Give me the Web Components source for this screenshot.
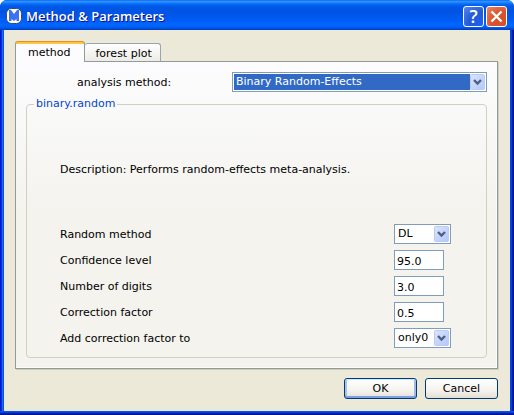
<!DOCTYPE html>
<html lang="en">
<head>
<meta charset="utf-8">
<title>Method &amp; Parameters</title>
<style>
  html { background: #fff; }
  body { margin: 0; font: 11px/14px "DejaVu Sans", sans-serif; color: #000; }
</style>
</head>
<body>
<dialog-window>
  <window-title slot="title">Method &amp; Parameters</window-title>
  <tab-pane>
    <combo-row label="analysis method:" value="Binary Random-Effects"></combo-row>
    <param-group>
      <span slot="legend">binary.random</span>
      <span slot="description">Description: Performs random-effects meta-analysis.</span>
      <param-row type="combo" value="DL">Random method</param-row>
      <param-row value="95.0">Confidence level</param-row>
      <param-row value="3.0">Number of digits</param-row>
      <param-row value="0.5">Correction factor</param-row>
      <param-row type="combo" value="only0">Add correction factor to</param-row>
    </param-group>
  </tab-pane>
  <push-button slot="actions" default>OK</push-button>
  <push-button slot="actions">Cancel</push-button>
</dialog-window>

<script>
const comboCss = `
  label { padding-top: 2px; }
  .combo { display: grid; height: 20px; box-sizing: border-box; border: 1px solid #7f9db9; background: #fff; padding: 1px; }
  .combo > * { grid-area: 1 / 1; }
  select { appearance: none; border: 0; margin: 0; padding: 0 18px 0 2px; min-width: 0; width: 100%;
    font: inherit; color: inherit; background: transparent; outline: 0; border-radius: 0; }
  .arrow { justify-self: end; pointer-events: none; display: block; }
`;
const comboMarkup = value => `
  <div class="combo">
    <select id="field"><option selected>${value}</option></select>
    <svg class="arrow" width="15" height="16" viewBox="0 0 15 16" aria-hidden="true">
      <defs><linearGradient id="g" x1="0" y1="0" x2="1" y2="1">
        <stop offset="0" stop-color="#dce6fd"/><stop offset=".5" stop-color="#c6d5fc"/><stop offset="1" stop-color="#b3c7f8"/>
      </linearGradient></defs>
      <rect x="0.5" y="0.5" width="14" height="15" rx="1" fill="url(#g)" stroke="#bccbf3"/>
      <path d="M4 6 7.5 9.5 11 6" fill="none" stroke="#4d6185" stroke-width="2.4"/>
    </svg>
  </div>`;

class ShadowBase extends HTMLElement {
  connectedCallback() {
    if (!this.shadowRoot) this.attachShadow({ mode: "open" }).innerHTML = this.markup();
  }
}

customElements.define("dialog-window", class extends ShadowBase {
  markup() { return `
    <style>
      :host { display: flex; flex-direction: column; box-sizing: border-box; min-height: 100vh;
        background: linear-gradient(90deg, #0019cf 0 1px, #0831d9 1px 2px, #166aee 2px 3px, #0855dd 3px 4px, #0046e8 4px calc(100% - 3px), #0040e0 calc(100% - 3px) calc(100% - 2px), #0020b0 calc(100% - 2px) calc(100% - 1px), #00138c calc(100% - 1px));
        border-radius: 7px 7px 0 0; overflow: hidden; }
      .body { flex: 1; display: flex; flex-direction: column; margin: 0 4px; padding: 11px 12px 12px 11px; background: #ece9d8; }
      ::slotted(tab-pane) { flex: 1; }
      .actions { display: flex; justify-content: flex-end; gap: 8px; padding-top: 9px; }
      .bottom { height: 4px; background: linear-gradient(#0855e8 0 1px, #0040d8 1px 2px, #0020b0 2px 3px, #00138c 3px); }
    </style>
    <slot name="title"></slot>
    <div class="body"><slot></slot><div class="actions"><slot name="actions"></slot></div></div>
    <div class="bottom"></div>`; }
});

customElements.define("window-title", class extends ShadowBase {
  markup() { return `
    <style>
      :host { display: flex; align-items: center; gap: 2px; height: 30px; box-sizing: border-box; padding: 2px 7px 0 6px;
        color: #fff; font: 600 13px/18px "Open Sans", sans-serif; text-shadow: 1px 1px #0f1089;
        background: linear-gradient(#0058ee 0, #3593ff 1px, #288eff 2px, #127dff 3px, #036ffc 4px, #0262ee 5px, #0057e5 7px, #0054e3 12px, #0058eb 16px, #005bf5 20px, #0066ff 24px, #0062f8 27px, #0047d0 29px, #003dc0 30px); }
      h1 { flex: 1; margin: 0; padding-left: 2px; font: inherit; }
      svg { display: block; }
      button { display: flex; align-items: center; justify-content: center; width: 21px; height: 21px; padding: 0; box-sizing: border-box;
        border: 1px solid #fff; border-radius: 3px; color: #fff; }
      .help { background: radial-gradient(circle at 90% 90%, #1a62f0, #2459d5 50%, #5b87ec 100%); font: 600 18px/18px "Open Sans", sans-serif; text-shadow: none; }
      .close { background: radial-gradient(circle at 90% 90%, #d9512c, #d9512c 50%, #ec8468 100%); }
    </style>
    <svg width="16" height="16" viewBox="0 0 16 16" aria-hidden="true">
      <rect x="0.5" y="0.5" width="15" height="15" rx="5" fill="#fff" stroke="#344b70"/>
      <path d="M3 2H5L8 6 11 2H13V13H10.500V11L8 13 5.500 11V13H3Z" fill="#3c71f2"/>
    </svg>
    <h1><slot></slot></h1>
    <button class="help" type="button" aria-label="Help">?</button>
    <button class="close" type="button" aria-label="Close">
      <svg width="13" height="13" viewBox="0 0 13 13" aria-hidden="true"><path d="M1.500 1.500 11.500 11.500M11.500 1.500 1.500 11.500" stroke="#fff" stroke-width="2.400"/></svg>
    </button>`; }
});

customElements.define("tab-pane", class extends ShadowBase {
  markup() { return `
    <style>
      :host { display: flex; flex-direction: column; }
      .tabs { display: flex; align-items: flex-end; margin-bottom: -1px; }
      button { font: inherit; color: inherit; box-sizing: border-box; margin: 0; border: 1px solid #919b9c; border-radius: 3px 3px 0 0; }
      .on { height: 21px; padding: 2px 14px 0 12px; border-bottom: 0; background: linear-gradient(#ffc73c 2px, #fcfcfe 2px); border-top-color: #e68b2c; z-index: 1; }
      .off { height: 18px; margin-bottom: 1px; padding: 2px 8px 0 10px; border-left: 0; border-bottom: 0; background: linear-gradient(#fff, #ecebe6); border-color: #91a7b4; }
      .pane { flex: 1; display: flex; flex-direction: column; gap: 5px; box-sizing: border-box; padding: 10px;
        border: 1px solid #919b9c; background: linear-gradient(#fcfcfe, #f4f3ee 50%); box-shadow: 1px 1px #d0cebf, inset -1px -1px #fcfcfa; }
      ::slotted(param-group) { flex: 1; }
    </style>
    <div class="tabs" role="tablist">
      <button class="on" type="button" role="tab" aria-selected="true">method</button>
      <button class="off" type="button" role="tab" aria-selected="false">forest plot</button>
    </div>
    <div class="pane" role="tabpanel" aria-label="method"><slot></slot></div>`; }
});

customElements.define("combo-row", class extends ShadowBase {
  markup() { return `
    <style>
      :host { display: grid; grid-template-columns: 206px 1fr; align-items: center; }
      label { padding-left: 51px; }
      ${comboCss}
      .combo select { color: #fff; background: linear-gradient(#316ac5, #316ac5) no-repeat 0 0 / calc(100% - 15px) 100%; }
      select option { color: #000; background: #fff; }
    </style>
    <label for="field">${this.getAttribute("label")}</label>
    ${comboMarkup(this.getAttribute("value"))}`; }
});

customElements.define("param-group", class extends ShadowBase {
  markup() { return `
    <style>
      :host { display: flex; }
      fieldset { flex: 1; min-width: 0; display: flex; flex-direction: column; box-sizing: border-box; margin: 0; padding: 0 35px 9px 33px;
        border: 1px solid #d0d0bf; border-radius: 4px; }
      legend { margin-left: -26px; padding: 0 2px; color: #0046d5; }
      .desc { flex: 1; display: flex; align-items: center; padding-top: 4px; }
      .rows { display: grid; gap: 6px; }
    </style>
    <fieldset>
      <legend><slot name="legend"></slot></legend>
      <div class="desc"><slot name="description"></slot></div>
      <div class="rows"><slot></slot></div>
    </fieldset>`; }
});

customElements.define("param-row", class extends ShadowBase {
  markup() {
    const combo = this.getAttribute("type") === "combo";
    const value = this.getAttribute("value");
    return `
    <style>
      :host { display: grid; grid-template-columns: 1fr 57px; align-items: center; }
      ${comboCss}
      input { width: 50px; height: 20px; box-sizing: border-box; margin: 0; padding: 2px 2px 0; border: 1px solid #7f9db9;
        background: #fff; font: inherit; color: inherit; }
    </style>
    <label for="field"><slot></slot></label>
    ${combo ? comboMarkup(value) : `<input id="field" type="text" value="${value}">`}`; }
});

customElements.define("push-button", class extends ShadowBase {
  markup() { return `
    <style>
      :host { display: block; }
      button { width: 73px; height: 21px; box-sizing: border-box; margin: 0; padding: 1px 0 0; border: 1px solid #003c74; border-radius: 3px;
        font: inherit; color: inherit; background: linear-gradient(#fff, #f4f3ee 60%, #e3dfd5); display: block; }
      :host([default]) button { box-shadow: inset 0 1px #cee7ff, inset 0 -2px #7f9fe4, inset 2px 0 #a9c2f0, inset -2px 0 #a0baee; }
    </style>
    <button type="button"><slot></slot></button>`; }
});
</script>
</body>
</html>
